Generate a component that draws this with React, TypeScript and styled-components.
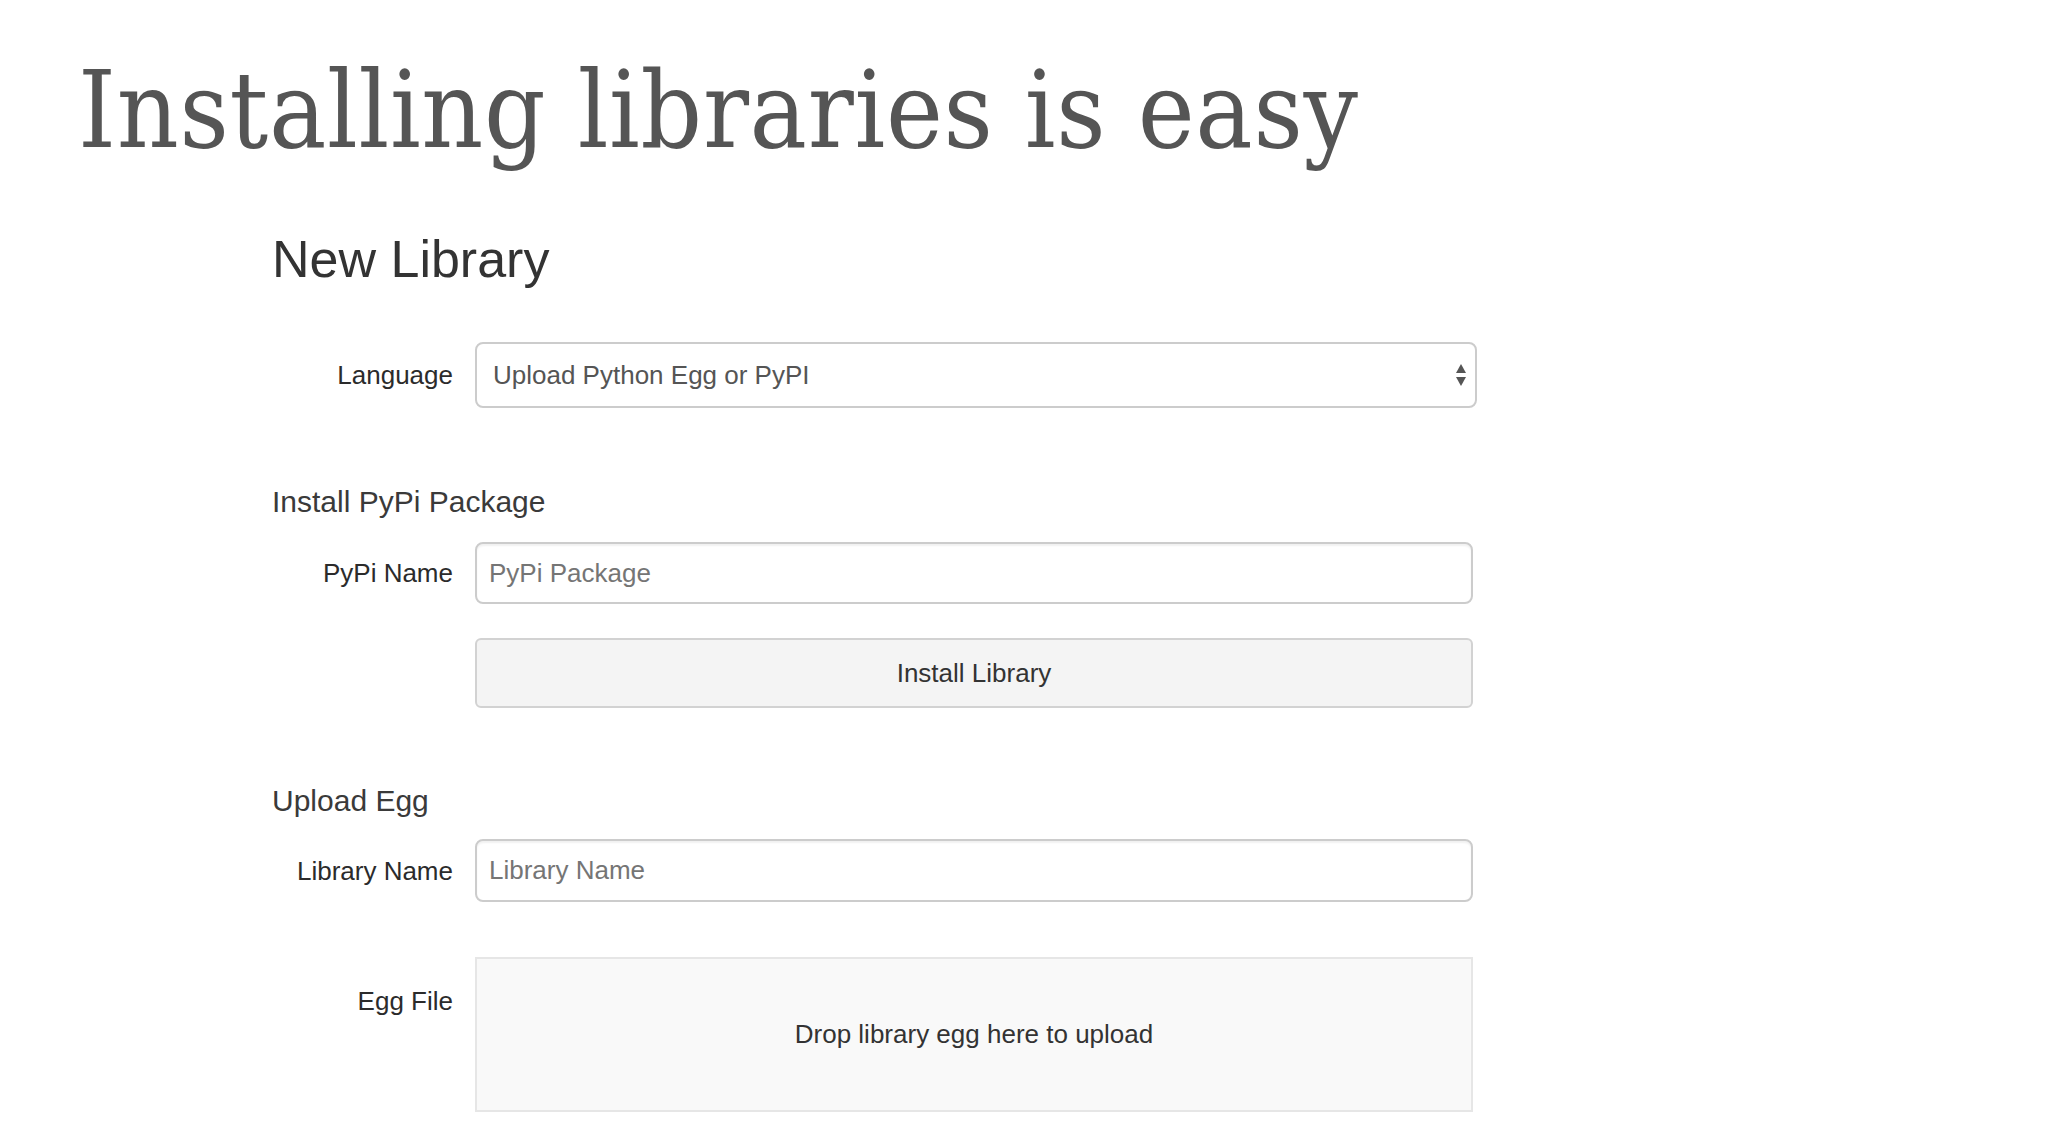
import React, { FC } from "react";
import styled, { createGlobalStyle } from "styled-components";

const GlobalStyle = createGlobalStyle`
  html, body {
    margin: 0;
    padding: 0;
    background: #ffffff;
  }

  body {
    font-family: "Liberation Sans", Arial, sans-serif;
    color: #333333;
  }
`;

const Page = styled.div`
  display: flex;
  flex-direction: column;
  padding-top: 45px;
  min-height: 1126px;
  box-sizing: border-box;
`;

const Title = styled.h1`
  margin: 0 0 0 78px;
  font-family: "DejaVu Serif", "Liberation Serif", serif;
  font-stretch: condensed;
  font-weight: 400;
  font-size: 107px;
  line-height: 130px;
  letter-spacing: 0.7px;
  color: #555555;
  white-space: nowrap;
`;

const Form = styled.form`
  display: flex;
  flex-direction: column;
  margin-left: 272px;
  width: 1210px;
`;

const Heading = styled.h2`
  margin: 54px 0 0;
  font-size: 52px;
  font-weight: 400;
  line-height: 60px;
  color: #333333;
`;

const SubHeading = styled.h3<{ $gap: number }>`
  margin: ${({ $gap }) => $gap}px 0 0;
  font-size: 30px;
  font-weight: 400;
  line-height: 36px;
  color: #3a3a3a;
`;

const Row = styled.div<{ $gap: number; $top?: boolean }>`
  display: grid;
  grid-template-columns: 181px auto;
  column-gap: 22px;
  align-items: ${({ $top }) => ($top ? "start" : "center")};
  margin-top: ${({ $gap }) => $gap}px;
`;

const Label = styled.label<{ $pad?: number }>`
  justify-self: end;
  font-size: 26px;
  line-height: 32px;
  color: #2b2b2b;
  padding-top: ${({ $pad }) => $pad ?? 0}px;
`;

const SelectWrap = styled.div`
  position: relative;
  width: 1002px;
`;

const Select = styled.select`
  appearance: none;
  -webkit-appearance: none;
  display: block;
  width: 100%;
  height: 66px;
  box-sizing: border-box;
  padding: 0 40px 0 16px;
  border: 2px solid #cccccc;
  border-radius: 8px;
  background: #ffffff;
  font-family: "Liberation Sans", Arial, sans-serif;
  font-size: 26px;
  color: #555555;
  outline: none;
`;

const Arrows = styled.svg`
  position: absolute;
  right: 10px;
  top: 21px;
  pointer-events: none;
`;

const TextInput = styled.input<{ $h: number }>`
  display: block;
  width: 998px;
  height: ${({ $h }) => $h}px;
  box-sizing: border-box;
  padding: 0 12px;
  border: 2px solid #cccccc;
  border-radius: 8px;
  background: #ffffff;
  box-shadow: inset 0 2px 2px rgba(0, 0, 0, 0.06);
  font-family: "Liberation Sans", Arial, sans-serif;
  font-size: 26px;
  color: #555555;
  outline: none;

  ::placeholder {
    color: #999999;
  }
`;

const Button = styled.button`
  display: block;
  width: 998px;
  height: 70px;
  box-sizing: border-box;
  border: 2px solid #d2d2d2;
  border-radius: 6px;
  background: #f4f4f4;
  font-family: "Liberation Sans", Arial, sans-serif;
  font-size: 26px;
  color: #333333;
  cursor: pointer;
`;

const DropZone = styled.div`
  display: flex;
  align-items: center;
  justify-content: center;
  width: 998px;
  height: 155px;
  box-sizing: border-box;
  border: 2px solid #e6e6e6;
  background: #f9f9f9;
  font-size: 26px;
  color: #333333;
`;

const Spacer = styled.div`
  grid-column: 1;
`;

const App: FC = () => (
  <>
    <GlobalStyle />
    <Page>
      <Title>Installing libraries is easy</Title>
      <Form onSubmit={(e) => e.preventDefault()}>
        <Heading>New Library</Heading>

        <Row $gap={53}>
          <Label htmlFor="language">Language</Label>
          <SelectWrap>
            <Select id="language" defaultValue="python">
              <option value="python">Upload Python Egg or PyPI</option>
              <option value="java">Upload Java/Scala JAR</option>
              <option value="maven">Maven Coordinate</option>
            </Select>
            <Arrows width="12" height="24" viewBox="0 0 12 24">
              <path d="M6 1 L11 10 L1 10 Z" fill="#555555" />
              <path d="M1 14 L11 14 L6 23 Z" fill="#555555" />
            </Arrows>
          </SelectWrap>
        </Row>

        <SubHeading $gap={76}>Install PyPi Package</SubHeading>
        <Row $gap={22}>
          <Label htmlFor="pypi">PyPi Name</Label>
          <TextInput id="pypi" $h={62} placeholder="PyPi Package" />
        </Row>
        <Row $gap={34}>
          <Spacer />
          <Button type="button">Install Library</Button>
        </Row>

        <SubHeading $gap={75}>Upload Egg</SubHeading>
        <Row $gap={20}>
          <Label htmlFor="libname">Library Name</Label>
          <TextInput id="libname" $h={63} placeholder="Library Name" />
        </Row>
        <Row $gap={55} $top>
          <Label $pad={28}>Egg File</Label>
          <DropZone>Drop library egg here to upload</DropZone>
        </Row>
      </Form>
    </Page>
  </>
);

export default App;
